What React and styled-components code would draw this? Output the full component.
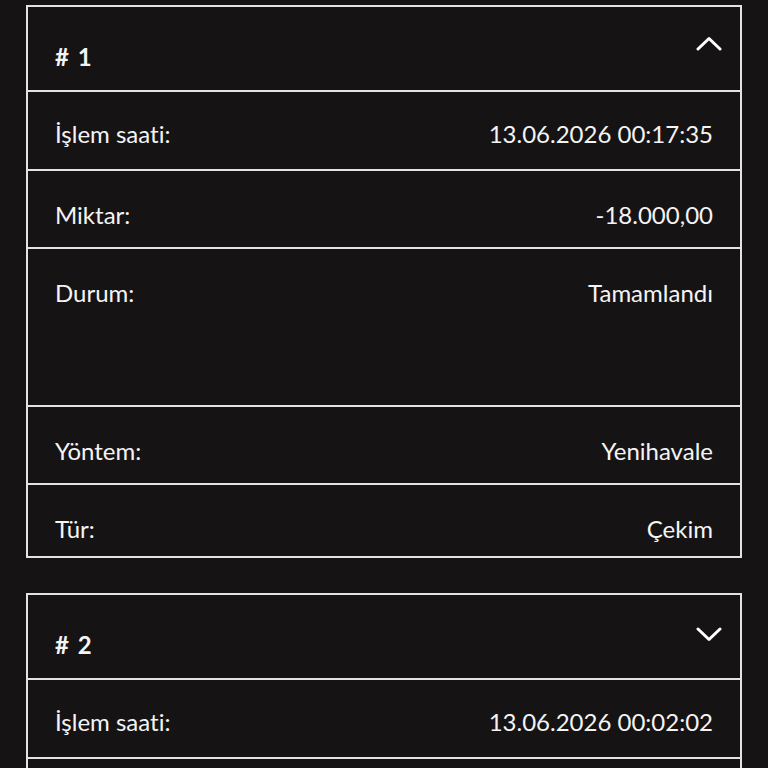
import React from 'react'
import styled, { createGlobalStyle } from 'styled-components'

const GlobalStyle = createGlobalStyle`
  html, body {
    margin: 0;
    padding: 0;
    background: #161314;
  }
  body {
    font-family: Lato, "Open Sans", "Liberation Sans", sans-serif;
    font-variant-ligatures: none;
    color: #f4f4f4;
  }
`

const Page = styled.div`
  display: flex;
  flex-direction: column;
  gap: 35px;
  padding: 5px 26px 40px;
`

const Card = styled.section`
  border: 2px solid #e4e2e2;
  display: flex;
  flex-direction: column;
`

const Header = styled.div`
  display: flex;
  justify-content: space-between;
  align-items: flex-start;
  height: 85px;
  box-sizing: border-box;
  padding: 0 18px 0 27px;
  border-bottom: 2px solid #e4e2e2;
`

const Title = styled.div`
  font-size: 24px;
  font-weight: 700;
  line-height: 1.2;
  padding-top: 36px;
  word-spacing: 3px;
`

const Toggle = styled.svg`
  margin-top: ${props => props.open ? '29px' : '31px'};
  flex: none;
`

const rowHeight = ({ tall, first, last }) => {
  if (tall) return '158px'
  if (first) return '79px'
  if (last) return '71px'
  return '78px'
}

const Row = styled.div`
  display: flex;
  justify-content: space-between;
  align-items: flex-start;
  height: ${rowHeight};
  box-sizing: border-box;
  padding: ${props => props.first ? '28px' : '30px'} 27px 0;
  font-size: 24px;
  line-height: 1.2;
  border-bottom: ${props => props.last ? 'none' : '2px solid #e4e2e2'};
`

const Label = styled.span`
  font-weight: 400;
`

const Value = styled.span`
  font-weight: 400;
  text-align: right;
`

const Chevron = ({ open }) => (
  <Toggle open={open} width='26' height='16' viewBox='0 0 26 16' fill='none'>
    <polyline
      points={open ? '2,13 13,2.5 24,13' : '2,3 13,13.5 24,3'}
      stroke='#ffffff'
      strokeWidth='3'
      strokeLinecap='round'
      strokeLinejoin='round'
    />
  </Toggle>
)

const transactions = [
  {
    id: 1,
    open: true,
    time: '13.06.2026 00:17:35',
    amount: '-18.000,00',
    status: 'Tamamlandı',
    method: 'Yenihavale',
    type: 'Çekim'
  },
  {
    id: 2,
    open: false,
    time: '13.06.2026 00:02:02',
    amount: '-18.000,00',
    status: 'Tamamlandı',
    method: 'Yenihavale',
    type: 'Çekim'
  }
]

function Transaction ({ tx }) {
  return (
    <Card>
      <Header>
        <Title># {tx.id}</Title>
        <Chevron open={tx.open} />
      </Header>
      <Row first>
        <Label>İşlem saati:</Label>
        <Value>{tx.time}</Value>
      </Row>
      <Row>
        <Label>Miktar:</Label>
        <Value>{tx.amount}</Value>
      </Row>
      <Row tall>
        <Label>Durum:</Label>
        <Value>{tx.status}</Value>
      </Row>
      <Row>
        <Label>Yöntem:</Label>
        <Value>{tx.method}</Value>
      </Row>
      <Row last>
        <Label>Tür:</Label>
        <Value>{tx.type}</Value>
      </Row>
    </Card>
  )
}

export default function App () {
  return (
    <>
      <GlobalStyle />
      <Page>
        {transactions.map(tx => <Transaction key={tx.id} tx={tx} />)}
      </Page>
    </>
  )
}
